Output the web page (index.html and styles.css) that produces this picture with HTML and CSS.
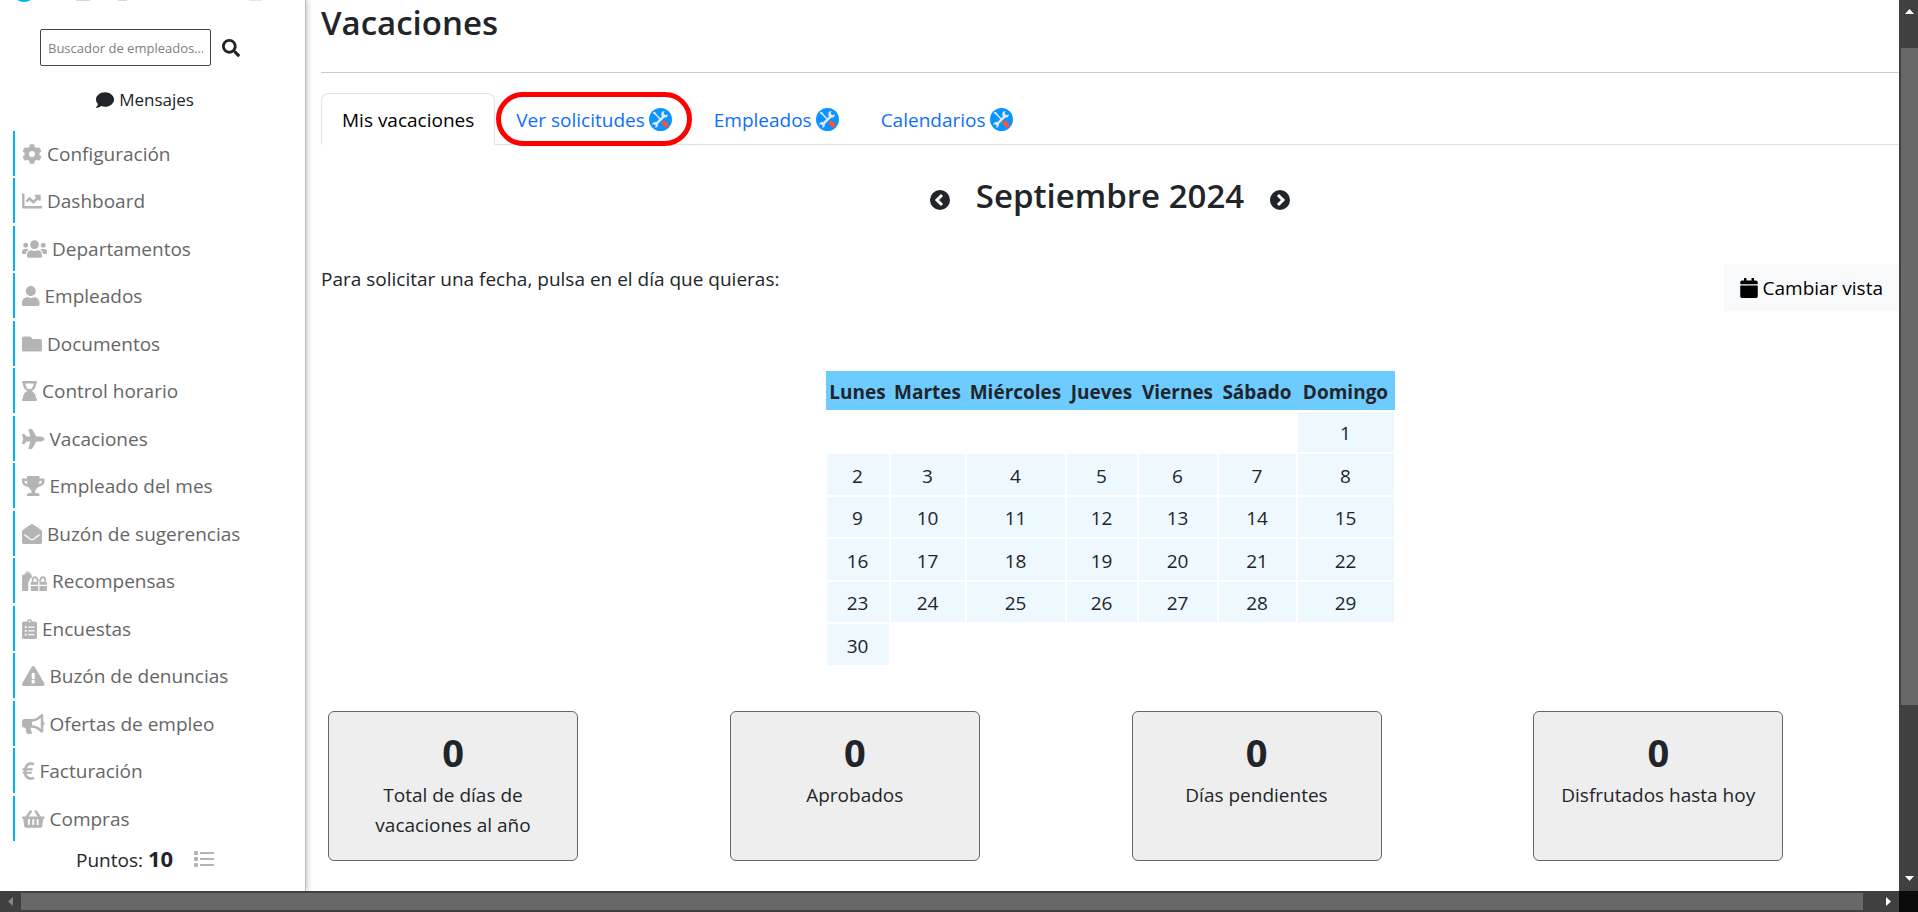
FILE: index.html
```html
<!DOCTYPE html>
<html lang="es">
<head>
<meta charset="UTF-8">
<meta name="viewport" content="width=device-width, initial-scale=1.0">
<title>Vacaciones</title>
<link rel="stylesheet" href="styles.css">
</head>
<body>
<svg class="defs" aria-hidden="true">
    <symbol id="tools" viewBox="0 0 24 24">
        <circle cx="12" cy="12" r="12" fill="#0a94ff"/>
        <path d="M5 4.500L12 12" stroke="#dfe9f2" stroke-width="1.500"/>
        <path d="M4.500 4l2.600 1 .6 2-1 .4-2.200-1.600z" fill="#dfe9f2"/>
        <path d="M6.500 17.700L16.500 7.600" stroke="#dfe9f2" stroke-width="2.600"/>
        <path d="M19.600 6.400a3.400 3.400 0 1 1-3.300-3.200l-1 2.600 1.800 1.700z" fill="#dfe9f2"/>
        <path d="M3.200 17.400a3 3 0 1 1 3 3.300l1-2.300-1.800-1.400z" fill="#dfe9f2"/>
        <path d="M14.300 14.300l5 5" stroke="#ff5230" stroke-width="4.600"/>
    </symbol>
</svg>
<div class="window">
    <aside class="sidebar">
        <svg class="logo" viewBox="0 0 305 4" aria-hidden="true">
            <ellipse cx="24" cy="-5" rx="10" ry="7" fill="#00b4f0"/>
            <path d="M76 0h14v1H76zM118 0h9v1h-9z" fill="#cddae6"/>
            <path d="M249 0h13v1h-13z" fill="#c4f1fb"/>
        </svg>
        <form class="search">
            <input type="text" placeholder="Buscador de empleados..." aria-label="Buscador de empleados">
            <button type="button" aria-label="Buscar">
                <svg viewBox="0 0 512 512"><path d="M505 442.700L405.300 343c-4.500-4.500-10.600-7-17-7H372c27.600-35.300 44-79.700 44-128C416 93.100 322.900 0 208 0S0 93.100 0 208s93.100 208 208 208c48.300 0 92.700-16.400 128-44v16.300c0 6.400 2.500 12.500 7 17l99.700 99.700c9.400 9.400 24.600 9.400 33.900 0l28.300-28.300c9.400-9.400 9.400-24.600.1-34zM208 336c-70.700 0-128-57.200-128-128 0-70.700 57.200-128 128-128 70.700 0 128 57.200 128 128 0 70.700-57.200 128-128 128z"/></svg>
            </button>
        </form>
        <a class="messages" href="#">
            <svg viewBox="0 0 512 512"><path d="M256 32C114.600 32 0 125.100 0 240c0 49.600 21.400 95 57 130.700C44.500 421.100 2.700 466 2.200 466.500c-2.200 2.300-2.800 5.700-1.500 8.700S4.800 480 8 480c66.300 0 116-31.800 140.600-51.400 32.700 12.300 69 19.400 107.400 19.400 141.400 0 256-93.100 256-208S397.400 32 256 32z"/></svg>
            Mensajes
        </a>
        <nav>
            <ul class="menu">
                <li><a href="#"><svg viewBox="0 0 512 512"><path d="M487.400 315.700l-42.600-24.600c4.300-23.200 4.300-47 0-70.200l42.600-24.600c4.900-2.800 7.100-8.600 5.500-14-11.100-35.600-30-67.800-54.700-94.600-3.800-4.100-10-5.100-14.800-2.300L380.800 110c-17.900-15.400-38.500-27.300-60.800-35.100V25.800c0-5.600-3.900-10.500-9.400-11.700-36.700-8.200-74.300-7.800-109.200 0-5.500 1.200-9.400 6.100-9.400 11.700V75c-22.200 7.900-42.800 19.800-60.800 35.100L88.700 85.500c-4.900-2.800-11-1.900-14.800 2.300-24.700 26.700-43.600 58.900-54.700 94.600-1.700 5.400.6 11.200 5.500 14L67.300 221c-4.300 23.200-4.300 47 0 70.200l-42.600 24.600c-4.900 2.800-7.100 8.600-5.500 14 11.100 35.600 30 67.800 54.700 94.600 3.800 4.100 10 5.100 14.800 2.300l42.600-24.600c17.900 15.400 38.500 27.300 60.800 35.100v49.200c0 5.600 3.900 10.500 9.400 11.700 36.700 8.200 74.300 7.800 109.200 0 5.500-1.200 9.400-6.100 9.400-11.700v-49.200c22.200-7.900 42.800-19.800 60.800-35.100l42.600 24.600c4.900 2.800 11 1.900 14.800-2.300 24.700-26.700 43.600-58.900 54.700-94.600 1.500-5.500-.7-11.300-5.600-14.100zM256 336c-44.100 0-80-35.900-80-80s35.900-80 80-80 80 35.900 80 80-35.900 80-80 80z"/></svg>Configuración</a></li>
                <li><a href="#"><svg viewBox="0 0 512 512"><path d="M496 384H64V80c0-8.840-7.160-16-16-16H16C7.160 64 0 71.160 0 80v336c0 17.670 14.330 32 32 32h464c8.840 0 16-7.160 16-16v-32c0-8.840-7.160-16-16-16zM464 96H345.940c-21.380 0-32.090 25.850-16.970 40.970l32.400 32.400L288 242.750l-73.370-73.370c-12.500-12.500-32.760-12.500-45.250 0l-68.690 68.690c-6.250 6.250-6.250 16.380 0 22.630l22.620 22.620c6.250 6.250 16.380 6.250 22.630 0L192 237.250l73.370 73.370c12.500 12.500 32.760 12.500 45.250 0l96-96 32.400 32.400c15.120 15.120 40.970 4.410 40.970-16.970V112c.01-8.840-7.150-16-15.990-16z"/></svg>Dashboard</a></li>
                <li><a href="#"><svg viewBox="0 0 640 512"><path d="M96 224c35.300 0 64-28.700 64-64s-28.700-64-64-64-64 28.700-64 64 28.700 64 64 64zm448 0c35.300 0 64-28.700 64-64s-28.700-64-64-64-64 28.700-64 64 28.700 64 64 64zm32 32h-64c-17.600 0-33.500 7.100-45.100 18.600 40.300 22.100 68.900 62 75.100 109.400h66c17.700 0 32-14.300 32-32v-32c0-35.300-28.700-64-64-64zm-256 0c61.900 0 112-50.100 112-112S381.900 32 320 32 208 82.100 208 144s50.100 112 112 112zm76.800 32h-8.300c-20.800 10-43.900 16-68.500 16s-47.600-6-68.500-16h-8.300C179.600 288 128 339.600 128 403.200V432c0 26.500 21.500 48 48 48h288c26.500 0 48-21.500 48-48v-28.800c0-63.600-51.600-115.200-115.200-115.200zm-223.700-13.400C161.500 263.100 145.600 256 128 256H64c-35.300 0-64 28.700-64 64v32c0 17.700 14.300 32 32 32h65.900c6.300-47.400 34.900-87.300 75.200-109.400z"/></svg>Departamentos</a></li>
                <li><a href="#"><svg viewBox="0 0 448 512"><path d="M224 256c70.700 0 128-57.300 128-128S294.700 0 224 0 96 57.300 96 128s57.300 128 128 128zm89.600 32h-16.700c-22.200 10.200-46.900 16-72.900 16s-50.600-5.800-72.900-16h-16.700C60.200 288 0 348.200 0 422.400V464c0 26.500 21.500 48 48 48h352c26.500 0 48-21.500 48-48v-41.600c0-74.200-60.200-134.400-134.400-134.400z"/></svg>Empleados</a></li>
                <li><a href="#"><svg viewBox="0 0 512 512"><path d="M464 128H272l-64-64H48C21.490 64 0 85.490 0 112v288c0 26.510 21.490 48 48 48h416c26.510 0 48-21.490 48-48V176c0-26.510-21.490-48-48-48z"/></svg>Documentos</a></li>
                <li><a href="#"><svg viewBox="0 0 384 512"><path d="M360 64c13.255 0 24-10.745 24-24V24c0-13.255-10.745-24-24-24H24C10.745 0 0 10.745 0 24v16c0 13.255 10.745 24 24 24 0 90.965 51.016 167.734 120.842 192C75.016 280.266 24 357.035 24 448c-13.255 0-24 10.745-24 24v16c0 13.255 10.745 24 24 24h336c13.255 0 24-10.745 24-24v-16c0-13.255-10.745-24-24-24 0-90.965-51.016-167.734-120.842-192C308.984 231.734 360 154.965 360 64zM192 208c-57.787 0-104-66.518-104-144h208c0 77.945-46.510 144-104 144z"/></svg>Control horario</a></li>
                <li><a href="#"><svg viewBox="0 0 576 512"><path d="M480 192H365.710L260.610 8.060A16.014 16.014 0 0 0 246.710 0h-65.500c-10.630 0-18.300 10.170-15.380 20.390L214.860 192H112l-43.200-57.600c-3.020-4.030-7.770-6.400-12.800-6.400H16.010C5.600 128-2.040 137.780.49 147.880L32 256 .49 364.120C-2.040 374.220 5.600 384 16.010 384H56c5.040 0 9.780-2.370 12.800-6.400L112 320h102.860l-49.030 171.600c-2.920 10.220 4.750 20.400 15.380 20.400h65.500c5.740 0 11.040-3.080 13.890-8.060L365.710 320H480c35.350 0 96-28.650 96-64s-60.650-64-96-64z"/></svg>Vacaciones</a></li>
                <li><a href="#"><svg viewBox="0 0 576 512"><path d="M552 64H448V24c0-13.300-10.700-24-24-24H152c-13.300 0-24 10.700-24 24v40H24C10.700 64 0 74.700 0 88v56c0 35.700 22.500 72.400 61.900 100.700 31.500 22.700 69.800 37.100 110 41.700C203.300 338.500 240 360 240 360v72h-48c-35.300 0-64 20.700-64 56v12c0 6.600 5.400 12 12 12h296c6.600 0 12-5.400 12-12v-12c0-35.300-28.700-56-64-56h-48v-72s36.700-21.500 68.100-73.600c40.300-4.600 78.600-19 110-41.700 39.300-28.300 61.900-65 61.900-100.700V88c0-13.300-10.700-24-24-24zM99.300 192.800C74.900 175.200 64 155.600 64 144v-16h64.200c1 32.600 5.800 61.200 12.800 86.200-15.100-5.200-29.200-12.400-41.700-21.400zM512 144c0 16.100-17.700 36.100-35.300 48.800-12.500 9-26.700 16.200-41.800 21.400 7-25 11.800-53.600 12.800-86.200H512v16z"/></svg>Empleado del mes</a></li>
                <li><a href="#"><svg viewBox="0 0 512 512"><path d="M512 464c0 26.510-21.490 48-48 48H48c-26.510 0-48-21.490-48-48V200.724a48 48 0 0 1 18.387-37.776c24.913-19.529 45.501-35.365 164.200-121.511C199.412 29.170 232.797-.347 256 .003c23.198-.354 56.596 29.172 73.413 41.433 118.687 86.137 139.303 101.995 164.200 121.512A48 48 0 0 1 512 200.724V464zm-65.666-196.605c-2.563-3.728-7.700-4.595-11.339-1.907-22.845 16.873-55.462 40.705-105.582 77.079-16.825 12.266-50.210 41.781-73.413 41.430-23.211.344-56.559-29.143-73.413-41.430-50.114-36.370-82.734-60.204-105.582-77.079-3.639-2.688-8.776-1.821-11.339 1.907l-9.072 13.196a7.998 7.998 0 0 0 1.839 10.967c22.887 16.899 55.454 40.690 105.303 76.868 20.274 14.781 56.524 47.813 92.264 47.573 35.724.242 71.961-32.771 92.263-47.573 49.850-36.179 82.418-59.970 105.303-76.868a7.998 7.998 0 0 0 1.839-10.967l-9.071-13.196z"/></svg>Buzón de sugerencias</a></li>
                <li><a href="#"><svg viewBox="0 0 640 512"><path d="M32 96h50L60 62l26-18 28 28V0h32v64l36-52 24 18-24 46 46-18 14 30-42 20h54v56c-36 8-62 40-62 80v16c-20 8-32 22-32 44v208H32c-18 0-32-14-32-32V128c0-18 14-32 32-32z"/><path d="M224 352v-48c0-18 14-32 32-32h160v80zm224 0v-80h160c18 0 32 14 32 32v48zM224 384h192v128H256c-18 0-32-14-32-32zm224 0h192v96c0 18-14 32-32 32H448z"/><path d="M408 272c-10-70-50-118-92-112-50 8-56 72-34 112m174 0c10-70 50-118 92-112 50 8 56 72 34 112" fill="none" stroke="currentColor" stroke-width="46"/></svg>Recompensas</a></li>
                <li><a href="#"><svg viewBox="0 0 384 512"><path fill-rule="evenodd" d="M336 64h-80c0-35.300-28.700-64-64-64s-64 28.700-64 64H48C21.500 64 0 85.500 0 112v352c0 26.500 21.500 48 48 48h288c26.500 0 48-21.500 48-48V112c0-26.500-21.500-48-48-48zM72 184h48v48H72zM72 280h48v48H72zM72 376h48v48H72zM160 192h160v32H160zM160 288h160v32H160zM160 384h160v32H160zM192 40a24 24 0 1 1 0 48 24 24 0 1 1 0-48z"/></svg>Encuestas</a></li>
                <li><a href="#"><svg viewBox="0 0 576 512"><path d="M569.517 440.013C587.975 472.007 564.806 512 527.940 512H48.054c-36.937 0-59.999-40.055-41.577-71.987L246.423 23.985c18.467-32.009 64.720-31.951 83.154 0l239.940 416.028zM288 354c-25.405 0-46 20.595-46 46s20.595 46 46 46 46-20.595 46-46-20.595-46-46-46zm-43.673-165.346l7.418 136c.347 6.364 5.609 11.346 11.982 11.346h48.546c6.373 0 11.635-4.982 11.982-11.346l7.418-136c.375-6.874-5.098-12.654-11.982-12.654h-63.383c-6.884 0-12.356 5.780-11.981 12.654z"/></svg>Buzón de denuncias</a></li>
                <li><a href="#"><svg viewBox="0 0 576 512"><path d="M576 240c0-23.630-12.950-44.040-32-55.120V32.010C544 23.260 537.020 0 512 0c-7.120 0-14.190 2.380-19.980 7.020l-85.030 68.030C364.280 109.190 310.660 128 256 128H64c-35.350 0-64 28.650-64 64v96c0 35.350 28.650 64 64 64h33.700c-1.390 10.480-2.180 21.140-2.180 32 0 39.770 9.260 77.350 25.560 110.940 5.190 10.690 16.520 17.060 28.400 17.060h74.280c26.050 0 41.690-29.840 25.900-50.560-16.400-21.520-26.150-48.360-26.150-77.440 0-11.110 1.620-21.790 4.410-32H256c54.660 0 108.280 18.810 150.980 52.950l85.030 68.030a32.023 32.023 0 0 0 19.980 7.020c24.920 0 32-22.780 32-32V295.130C563.050 284.040 576 263.630 576 240zm-96 141.420l-33.050-26.440C392.950 311.780 325.120 288 256 288v-96c69.120 0 136.950-23.780 190.950-66.980L480 98.580v282.840z"/></svg>Ofertas de empleo</a></li>
                <li><a href="#"><svg viewBox="0 0 320 512"><path d="M306 82C200 40 92 70 80 256s120 216 230 176" fill="none" stroke="currentColor" stroke-width="68"/><path d="M12 188h264l-12 52H12zM12 276h244l-12 52H12z"/></svg>Facturación</a></li>
                <li><a href="#"><svg viewBox="0 0 576 512"><path d="M576 216v16c0 13.255-10.745 24-24 24h-8l-26.113 182.788C514.509 462.435 494.257 480 470.370 480H105.630c-23.887 0-44.139-17.565-47.518-41.212L32 256h-8c-13.255 0-24-10.745-24-24v-16c0-13.255 10.745-24 24-24h67.341l106.780-146.821c10.395-14.292 30.407-17.453 44.701-7.058 14.293 10.395 17.453 30.408 7.058 44.701L170.477 192h235.046L326.120 82.821c-10.395-14.292-7.234-34.306 7.059-44.701 14.291-10.395 34.306-7.235 44.701 7.058L484.659 192H552c13.255 0 24 10.745 24 24zM312 392V280c0-13.255-10.745-24-24-24s-24 10.745-24 24v112c0 13.255 10.745 24 24 24s24-10.745 24-24zm112 0V280c0-13.255-10.745-24-24-24s-24 10.745-24 24v112c0 13.255 10.745 24 24 24s24-10.745 24-24zm-224 0V280c0-13.255-10.745-24-24-24s-24 10.745-24 24v112c0 13.255 10.745 24 24 24s24-10.745 24-24z"/></svg>Compras</a></li>
            </ul>
        </nav>
        <div class="points">
            <span>Puntos: <b>10</b></span>
            <svg viewBox="0 0 20 16"><path d="M1 0h2a1 1 0 0 1 1 1v2a1 1 0 0 1-1 1H1a1 1 0 0 1-1-1V1a1 1 0 0 1 1-1zM1 6h2a1 1 0 0 1 1 1v2a1 1 0 0 1-1 1H1a1 1 0 0 1-1-1V7a1 1 0 0 1 1-1zM1 12h2a1 1 0 0 1 1 1v2a1 1 0 0 1-1 1H1a1 1 0 0 1-1-1v-2a1 1 0 0 1 1-1zM6 1h14v2H6zM6 7h14v2H6zM6 13h14v2H6z"/></svg>
        </div>
    </aside>

    <main>
        <h1>Vacaciones</h1>
        <hr>
        <div class="tabs">
            <a class="tab active" href="#">Mis vacaciones</a>
            <a class="tab highlight" href="#">Ver solicitudes <svg><use href="#tools"/></svg></a>
            <a class="tab" href="#">Empleados <svg><use href="#tools"/></svg></a>
            <a class="tab" href="#">Calendarios <svg><use href="#tools"/></svg></a>
        </div>

        <div class="month">
            <button type="button" aria-label="Mes anterior"><svg viewBox="0 0 20 20"><circle cx="10" cy="10" r="10"/><path d="M12 5l-5 5 5 5" fill="none" stroke="#fff" stroke-width="3"/></svg></button>
            <h2>Septiembre 2024</h2>
            <button type="button" aria-label="Mes siguiente"><svg viewBox="0 0 20 20"><circle cx="10" cy="10" r="10"/><path d="M8 5l5 5-5 5" fill="none" stroke="#fff" stroke-width="3"/></svg></button>
        </div>

        <div class="toolbar">
            <p>Para solicitar una fecha, pulsa en el día que quieras:</p>
            <button type="button"><svg viewBox="0 0 448 512"><path d="M12 192h424c6.600 0 12 5.400 12 12v260c0 26.500-21.500 48-48 48H48c-26.500 0-48-21.500-48-48V204c0-6.600 5.400-12 12-12zm436-44v-36c0-26.500-21.500-48-48-48h-48V12c0-6.600-5.400-12-12-12h-40c-6.600 0-12 5.400-12 12v52H160V12c0-6.600-5.400-12-12-12h-40c-6.600 0-12 5.400-12 12v52H48C21.500 64 0 85.500 0 112v36c0 6.600 5.400 12 12 12h424c6.600 0 12-5.400 12-12z"/></svg>Cambiar vista</button>
        </div>

        <table class="calendar">
            <colgroup>
                <col class="w-mon"><col class="w-tue"><col class="w-wed"><col class="w-thu"><col class="w-fri"><col class="w-sat"><col class="w-sun">
            </colgroup>
            <thead>
                <tr><th>Lunes</th><th>Martes</th><th>Miércoles</th><th>Jueves</th><th>Viernes</th><th>Sábado</th><th>Domingo</th></tr>
            </thead>
            <tbody>
                <tr><td></td><td></td><td></td><td></td><td></td><td></td><td>1</td></tr>
                <tr><td>2</td><td>3</td><td>4</td><td>5</td><td>6</td><td>7</td><td>8</td></tr>
                <tr><td>9</td><td>10</td><td>11</td><td>12</td><td>13</td><td>14</td><td>15</td></tr>
                <tr><td>16</td><td>17</td><td>18</td><td>19</td><td>20</td><td>21</td><td>22</td></tr>
                <tr><td>23</td><td>24</td><td>25</td><td>26</td><td>27</td><td>28</td><td>29</td></tr>
                <tr><td>30</td><td></td><td></td><td></td><td></td><td></td><td></td></tr>
            </tbody>
        </table>

        <div class="cards">
            <div class="card"><strong>0</strong><p>Total de días de vacaciones al año</p></div>
            <div class="card"><strong>0</strong><p>Aprobados</p></div>
            <div class="card"><strong>0</strong><p>Días pendientes</p></div>
            <div class="card"><strong>0</strong><p>Disfrutados hasta hoy</p></div>
        </div>
    </main>

    <div class="scroll-y">
        <svg viewBox="0 0 9 5"><path d="M0 5L4.500 0 9 5z"/></svg>
        <div class="thumb"></div>
        <svg viewBox="0 0 9 5"><path d="M0 0h9L4.500 5z"/></svg>
    </div>
    <div class="scroll-x">
        <svg class="disabled" viewBox="0 0 5 9"><path d="M5 0v9L0 4.500z"/></svg>
        <div class="thumb"></div>
        <svg viewBox="0 0 5 9"><path d="M0 0v9l5-4.500z"/></svg>
    </div>
    <div class="corner"></div>
</div>
</body>
</html>
```
FILE: styles.css
```css
* {
    box-sizing: border-box;
}
body {
    margin: 0;
    font-family: 'Segoe UI', 'Open Sans', 'Noto Sans', sans-serif;
    font-size: 19px;
    line-height: 30px;
    color: #212529;
    background-color: #fff;
}
h1, h2, p, ul {
    margin: 0;
    padding: 0;
}
a {
    text-decoration: none;
}
button {
    font: inherit;
    border: none;
    padding: 0;
    background: none;
    cursor: pointer;
}
svg {
    fill: currentColor;
}
.defs {
    position: absolute;
    width: 0;
    height: 0;
}
.window {
    display: grid;
    grid-template-columns: 306px minmax(0, 1fr) 19px;
    grid-template-rows: minmax(0, 1fr) 21px;
    height: 100vh;
    overflow: hidden;
}

/* sidebar */
.sidebar {
    border-right: 1px solid #bbb;
    box-shadow: 1px 0 6px rgba(0,0,0,0.25);
}
.logo {
    display: block;
    width: 305px;
    height: 4px;
}
.search {
    display: flex;
    align-items: center;
    gap: 11px;
    padding: 25px 0 0 40px;
}
.search input {
    width: 171px;
    height: 37px;
    padding: 0 7px;
    border: 1px solid #444;
    border-radius: 2px;
    font-family: inherit;
    font-size: 13px;
}
.search input::placeholder {
    color: #808080;
}
.search button {
    color: #212529;
}
.search svg {
    display: block;
    width: 18px;
    height: 18px;
}
.messages {
    display: flex;
    justify-content: center;
    align-items: center;
    gap: 5px;
    padding: 19px 15px 16px 0;
    font-size: 17px;
    color: #212529;
}
.messages svg {
    width: 18px;
    height: 18px;
}
.menu {
    list-style: none;
    padding-left: 13px;
}
.menu li {
    margin-bottom: 2px;
}
.menu li:nth-child(even) {
    margin-bottom: 3px;
}
.menu a {
    display: flex;
    align-items: center;
    gap: 5px;
    height: 45px;
    padding-left: 7px;
    border-left: 2px solid #00b4f0;
    color: #666;
}
.menu svg {
    height: 20px;
    color: #b4b4b4;
}
.points {
    display: flex;
    align-items: center;
    gap: 21px;
    padding-left: 76px;
}
.points b {
    font-size: 22px;
}
.points svg {
    width: 20px;
    height: 16px;
    color: #b4b4b4;
}

/* content */
main {
    padding: 2px 0 0 15px;
    overflow: hidden;
}
h1, h2 {
    font-size: 33px;
    font-weight: 600;
    line-height: 42px;
}
hr {
    margin: 28px 0 20px;
    border: none;
    border-top: 1px solid #c8c9ca;
}
.tabs {
    display: flex;
    border-bottom: 1px solid #dee2e6;
}
.tab {
    display: flex;
    align-items: center;
    gap: 4px;
    height: 52px;
    margin-bottom: -1px;
    padding: 1px 20px 0;
    border: 1px solid transparent;
    border-radius: 8px 8px 0 0;
    color: #0d6efd;
}
.tab svg {
    width: 23px;
    height: 23px;
}
.tab.active {
    border-color: #dee2e6 #dee2e6 #fff;
    background-color: #fff;
    color: #000;
}
.tab.highlight {
    position: relative;
}
.tab.highlight::after {
    content: "";
    position: absolute;
    inset: -2px 0;
    border: 5px solid #f00;
    border-radius: 27px;
}
.month {
    display: flex;
    justify-content: center;
    align-items: center;
    gap: 26px;
    padding-top: 30px;
}
.month button {
    padding-top: 8px;
    color: #212529;
}
.month svg {
    display: block;
    width: 20px;
    height: 20px;
}
.toolbar {
    display: flex;
    justify-content: space-between;
    margin-top: 47px;
}
.toolbar button {
    display: flex;
    align-items: center;
    gap: 5px;
    height: 47px;
    padding: 0 16px;
    background-color: #f8f9fa;
    color: #000;
}
.toolbar svg {
    width: 18px;
    height: 20px;
}

/* calendar */
.calendar {
    margin: 60px auto 44px;
    border-collapse: collapse;
    table-layout: fixed;
    width: 569px;
    text-align: center;
}
.calendar th {
    height: 40px;
    padding: 2px 0 0;
    background-color: #6dcbff;
}
.calendar td {
    height: 42px;
    padding: 2px 0 0;
    border: 2px solid #fff;
    background-color: #edf8ff;
}
.calendar tr:nth-child(even) td {
    height: 43px;
}
.calendar td:empty {
    background: none;
}
.w-mon { width: 64px; }
.w-tue { width: 76px; }
.w-wed { width: 100px; }
.w-thu { width: 72px; }
.w-fri { width: 80px; }
.w-sat { width: 79px; }
.w-sun { width: 98px; }

/* the four cards run past the right edge */
.cards {
    display: grid;
    grid-template-columns: repeat(4, 1fr);
    margin: 0 -36px 0 7px;
}
.card {
    width: 250px;
    height: 150px;
    padding: 18px 24px;
    border: 1px solid #666;
    border-radius: 6px;
    background-color: #eee;
    text-align: center;
}
.card strong {
    display: block;
    margin-bottom: 5px;
    font-size: 38px;
    line-height: 45px;
}

/* scrollbars */
.scroll-y, .scroll-x {
    display: flex;
    align-items: center;
    justify-content: space-between;
    background-color: #404040;
    color: #fff;
}
.scroll-y {
    flex-direction: column;
    padding: 9px 0 10px 2px;
}
.scroll-y svg {
    width: 9px;
    height: 5px;
}
.scroll-y .thumb {
    width: 100%;
    flex: 1;
    margin: 34px 0 171px;
}
.scroll-x {
    grid-column: 1 / 3;
    padding: 0 8px;
}
.scroll-x svg {
    width: 5px;
    height: 9px;
}
.scroll-x .thumb {
    flex: 1;
    height: 17px;
    margin: 0 23px 0 8px;
}
.scroll-x .disabled {
    color: #868686;
}
.thumb {
    background-color: #686868;
}
.corner {
    background-color: #0a0a0a;
}
```
